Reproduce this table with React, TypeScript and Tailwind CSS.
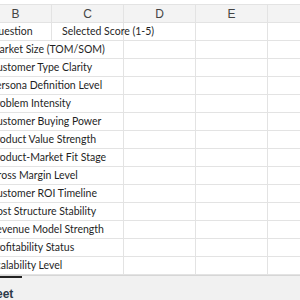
import React from "react";

const items = [
  "Market Size (TOM/SOM)",
  "Customer Type Clarity",
  "Persona Definition Level",
  "Problem Intensity",
  "Customer Buying Power",
  "Product Value Strength",
  "Product-Market Fit Stage",
  "Gross Margin Level",
  "Customer ROI Timeline",
  "Cost Structure Stability",
  "Revenue Model Strength",
  "Profitability Status",
  "Scalability Level",
];

const cell = "h-[18px] shrink-0 border-r border-b border-[#e3e3e3] flex items-center";
const txt = "font-['Lato',sans-serif] text-[10.5px] text-[#1f1f1f] whitespace-nowrap pl-[10px]";

export default function App() {
  return (
    <div className="w-[300px] h-[300px] overflow-hidden bg-white flex flex-col">
      <div className="h-[4px] shrink-0 bg-white" />
      <div className="flex flex-col border-t border-[#e3e3e3] ml-[-20px] shrink-0">
        <div className="flex">
          {["B", "C", "D", "E", ""].map((l, i) => (
            <div
              key={i}
              className={`${cell} w-[72px] bg-[#f3f3f3] justify-center font-['Liberation_Sans',sans-serif] text-[12px] text-[#444]`}
            >
              {l}
            </div>
          ))}
        </div>
        <div className="flex">
          <div className={`${cell} w-[72px]`}>
            <span className={txt}>Question</span>
          </div>
          <div className={`${cell} w-[72px] overflow-visible`}>
            <span className={txt}>Selected Score (1-5)</span>
          </div>
          <div className={`${cell} w-[72px]`} />
          <div className={`${cell} w-[72px]`} />
          <div className={`${cell} w-[72px]`} />
        </div>
        {items.map((t) => (
          <div className="flex" key={t}>
            <div className={`${cell} w-[144px] overflow-hidden`}>
              <span className={txt}>{t}</span>
            </div>
            <div className={`${cell} w-[72px]`} />
            <div className={`${cell} w-[72px]`} />
            <div className={`${cell} w-[72px]`} />
          </div>
        ))}
      </div>
      <div className="flex-1 bg-[#f1f1f1] border-t border-[#d6d6d6] flex items-start">
        <div className="ml-[-28px] flex flex-col items-center">
          <div className="h-[2px] w-[50px] bg-[#222]" />
          <span className="mt-[7px] font-['Liberation_Sans',sans-serif] text-[12px] font-semibold text-[#2b3a4a]">
            Sheet
          </span>
        </div>
      </div>
    </div>
  );
}
